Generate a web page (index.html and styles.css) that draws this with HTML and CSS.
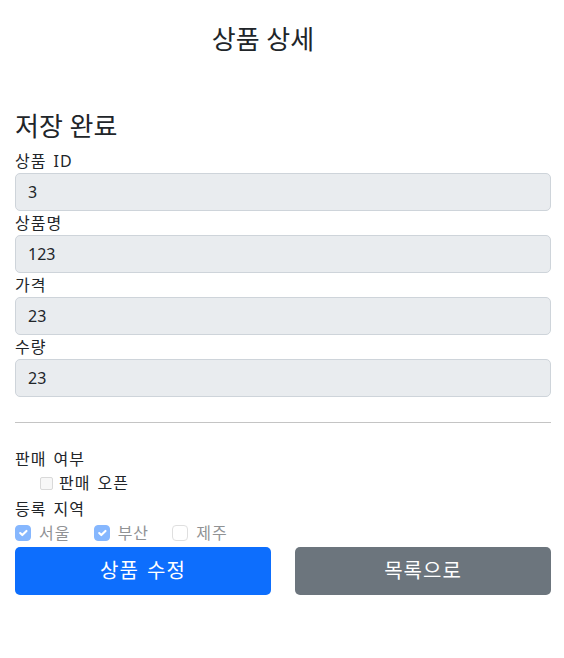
FILE: index.html
```html
<!DOCTYPE html>
<html lang="ko">

<head>
    <meta charset="UTF-8">
    <meta name="viewport" content="width=device-width, initial-scale=1.0">
    <title>상품 상세</title>
    <link rel="stylesheet" href="styles.css">
</head>

<body>
    <div class="container">
        <div class="page-header">
            <h2>상품 상세</h2>
        </div>

        <h2 class="status">저장 완료</h2>

        <div class="field">
            <label for="itemId">상품 ID</label>
            <input type="text" id="itemId" class="form-control" value="3" readonly>
        </div>
        <div class="field">
            <label for="itemName">상품명</label>
            <input type="text" id="itemName" class="form-control" value="123" readonly>
        </div>
        <div class="field">
            <label for="price">가격</label>
            <input type="text" id="price" class="form-control" value="23" readonly>
        </div>
        <div class="field">
            <label for="quantity">수량</label>
            <input type="text" id="quantity" class="form-control" value="23" readonly>
        </div>

        <hr class="divider">

        <!-- single checkbox -->
        <div>판매 여부</div>
        <div class="form-check">
            <input type="checkbox" id="open" class="plain-check" disabled>
            <label for="open">판매 오픈</label>
        </div>

        <!-- multi checkbox -->
        <div>
            <div>등록 지역</div>
            <div class="regions">
                <div class="check-inline">
                    <input type="checkbox" id="regions1" class="check-input" checked disabled>
                    <label for="regions1" class="check-label">서울</label>
                </div>
                <div class="check-inline">
                    <input type="checkbox" id="regions2" class="check-input" checked disabled>
                    <label for="regions2" class="check-label">부산</label>
                </div>
                <div class="check-inline">
                    <input type="checkbox" id="regions3" class="check-input" disabled>
                    <label for="regions3" class="check-label">제주</label>
                </div>
            </div>
        </div>

        <div class="actions">
            <button class="btn btn-primary" type="button">상품 수정</button>
            <button class="btn btn-secondary" type="button">목록으로</button>
        </div>
    </div>
</body>

</html>
```

FILE: styles.css
```css
body {
    margin: 0;
    font-family: "Noto Sans", "Noto Sans CJK KR", sans-serif;
    font-size: 16px;
    line-height: 1.5;
    letter-spacing: 1px;
    word-spacing: 2px;
    color: #212529;
    background-color: #fff;
}

.container {
    max-width: 536px;
    padding: 0 13px 0 15px;
}

h2 {
    margin: 0 0 8px;
    font-size: 26px;
    font-weight: 400;
    line-height: 31px;
    letter-spacing: 0;
    word-spacing: 0;
}

.page-header {
    padding: 24px 40px 48px 0;
    text-align: center;
}

.status {
    margin-bottom: 7px;
}

.field label {
    display: block;
}

.form-control {
    display: block;
    width: 100%;
    height: 38px;
    box-sizing: border-box;
    padding: 6px 12px;
    font: inherit;
    letter-spacing: 0;
    color: #212529;
    background-color: #e9ecef;
    border: 1px solid #ced4da;
    border-radius: 5px;
    outline: none;
}

.divider {
    margin: 25px 0 24px;
    border: 0;
    border-top: 1px solid #c4c4c4;
}

.form-check {
    display: flex;
    align-items: center;
    padding-left: 24px;
    margin-bottom: 2px;
}

.plain-check {
    appearance: none;
    width: 13px;
    height: 13px;
    margin: 0 6px 0 1px;
    box-sizing: border-box;
    border: 1px solid #d9d9d9;
    border-radius: 2px;
    background-color: #f7f7f7;
}

.regions {
    height: 24px;
}

.check-inline {
    display: inline-flex;
    align-items: center;
    gap: 8px;
    margin-right: 16px;
}

.check-input {
    appearance: none;
    width: 16px;
    height: 16px;
    margin: 0;
    box-sizing: border-box;
    border: 1px solid #dfdfdf;
    border-radius: 4px;
    background-color: #fff;
}

.check-input:checked {
    border-color: #86b7fe;
    background-color: #86b7fe;
    background-image: url("data:image/svg+xml,%3csvg xmlns='http://www.w3.org/2000/svg' viewBox='0 0 20 20'%3e%3cpath fill='none' stroke='%23fff' stroke-linecap='round' stroke-linejoin='round' stroke-width='3' d='M6 10l3 3l6-6'/%3e%3c/svg%3e");
    background-size: 100% 100%;
}

.check-label {
    color: #909294;
}

.actions {
    display: grid;
    grid-template-columns: 1fr 1fr;
    gap: 24px;
    margin-top: 2px;
}

.btn {
    height: 48px;
    padding: 8px 16px;
    font: inherit;
    font-size: 20px;
    letter-spacing: 1px;
    word-spacing: 2px;
    color: #fff;
    border: none;
    border-radius: 5px;
}

.btn-primary {
    background-color: #0d6efd;
}

.btn-secondary {
    background-color: #6c757d;
}
```
